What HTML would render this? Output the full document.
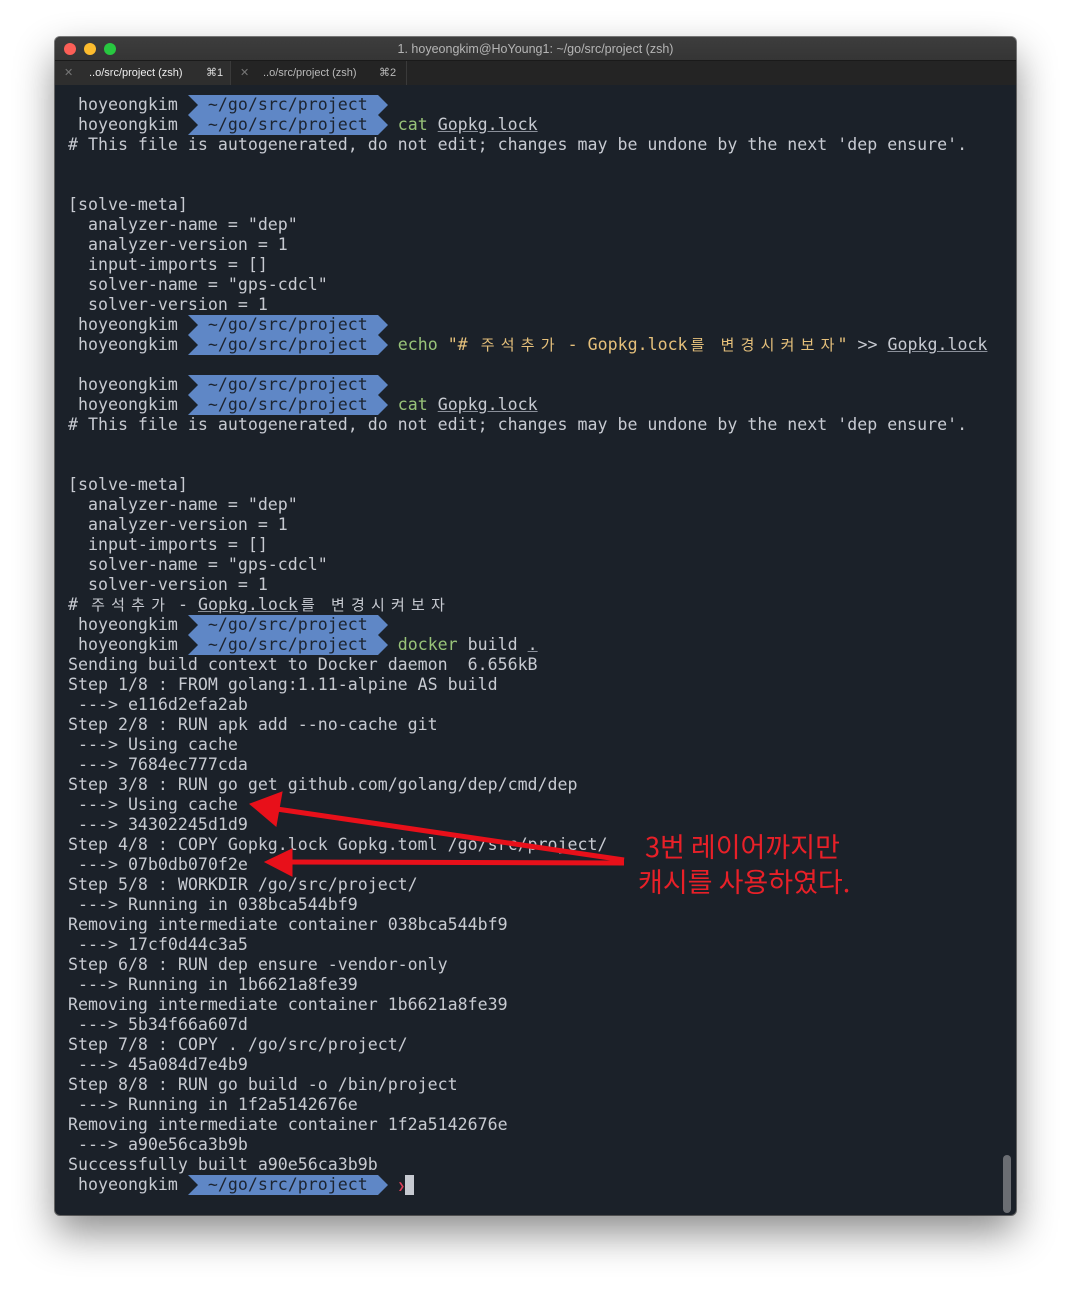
<!DOCTYPE html>
<html><head><meta charset="utf-8"><style>
html,body{margin:0;padding:0;background:#fff;width:1071px;height:1289px;overflow:hidden}
.win{position:absolute;left:55px;top:37px;width:961px;height:1178px;background:#1b2129;border-radius:5px;overflow:hidden;box-shadow:0 18px 40px rgba(0,0,0,.45),0 0 0 1px rgba(0,0,0,.5)}
.title{position:absolute;left:0;top:0;width:961px;height:23px;background:linear-gradient(#3d3d3d,#353535);color:#b5b5b5;font:12.5px "Liberation Sans",sans-serif;text-align:center;line-height:24px}
.dot{position:absolute;top:6px;width:12px;height:12px;border-radius:50%}
.tabs{position:absolute;left:0;top:23px;width:961px;height:24px;background:#242424;border-top:1px solid #1a1a1a;font:11px "Liberation Sans",sans-serif;color:#ddd}
.tab{position:absolute;top:0;height:24px;line-height:24px;border-right:1px solid #3a3a3a}
.l{position:absolute;left:0;height:20px;line-height:20px;white-space:pre}
.k{display:inline-block;width:20px;height:20px;line-height:20px;vertical-align:top;text-align:center;font-family:"Noto Sans CJK KR",sans-serif;font-size:15px;overflow:hidden}
.g{color:#98c379}.y{color:#e5c07b}.u{text-decoration:underline;text-decoration-color:#8a8f99}
.seg{position:absolute;left:120px;top:0}
.ann{position:absolute;font-family:"Noto Sans CJK KR",sans-serif;font-size:27px;color:#e82028;white-space:nowrap}
</style></head><body>
<div class="win">
<div class="title">1. hoyeongkim@HoYoung1: ~/go/src/project (zsh)
<div class="dot" style="left:9px;background:#fc5f57"></div><div class="dot" style="left:29px;background:#fdbc2e"></div><div class="dot" style="left:49px;background:#28c840"></div></div>
<div class="tabs">
<div class="tab" style="left:0;width:175px;background:#2e2e2e"><span style="position:absolute;left:9px;color:#777">✕</span><span style="position:absolute;left:34px;color:#eee">..o/src/project (zsh)</span><span style="position:absolute;left:151px">⌘1</span></div>
<div class="tab" style="left:176px;width:175px;color:#bbb"><span style="position:absolute;left:9px;color:#777">✕</span><span style="position:absolute;left:32px">..o/src/project (zsh)</span><span style="position:absolute;left:148px">⌘2</span></div>
</div>
<div style="position:absolute;left:948px;top:1118px;width:8px;height:58px;border-radius:4px;background:#6b6e73"></div>
</div>
<div id="term" style="position:absolute;left:68px;top:95px;font-family:'DejaVu Sans Mono','Noto Sans CJK KR',monospace;font-size:16.6px;color:#c7cad1">
</div>
<script>
function pr(cmd){return '<span style="position:relative"> hoyeongkim   </span>'+'<svg class="seg" width="201" height="20"><polygon points="0,0 190,0 200,10 190,20 0,20 10,10" fill="#5f87c6"/></svg><span style="position:relative;color:#1c2430">~/go/src/project</span><span style="position:relative">   '+(cmd||'')+'</span>';}
function K(s){return s.split('').map(function(c){return /[가-힣]/.test(c)?'<span class="k">'+c+'</span>':c}).join('');}
var hdr="# This file is autogenerated, do not edit; changes may be undone by the next 'dep ensure'.";
var meta=['[solve-meta]','  analyzer-name = "dep"','  analyzer-version = 1','  input-imports = []','  solver-name = "gps-cdcl"','  solver-version = 1'];
var L=[];
L.push(pr());L.push(pr('<span class="g">cat</span> <span class="u">Gopkg.lock</span>'));L.push(hdr);L.push('');L.push('');
L=L.concat(meta);
L.push(pr());L.push(pr('<span class="g">echo</span> <span class="y">"'+K('# 주석추가 - Gopkg.lock를 변경시켜보자')+'"</span> &gt;&gt; <span class="u">Gopkg.lock</span>'));
L.push('');L.push(pr());L.push(pr('<span class="g">cat</span> <span class="u">Gopkg.lock</span>'));L.push(hdr);L.push('');L.push('');
L=L.concat(meta);
L.push(K('# 주석추가 - <span class="u">Gopkg.lock</span>를 변경시켜보자'));
L.push(pr());L.push(pr('<span class="g">docker</span> build <span class="u">.</span>'));
L=L.concat(['Sending build context to Docker daemon  6.656kB','Step 1/8 : FROM golang:1.11-alpine AS build',' ---> e116d2efa2ab','Step 2/8 : RUN apk add --no-cache git',' ---> Using cache',' ---> 7684ec777cda','Step 3/8 : RUN go get github.com/golang/dep/cmd/dep',' ---> Using cache',' ---> 34302245d1d9','Step 4/8 : COPY Gopkg.lock Gopkg.toml /go/src/project/',' ---> 07b0db070f2e','Step 5/8 : WORKDIR /go/src/project/',' ---> Running in 038bca544bf9','Removing intermediate container 038bca544bf9',' ---> 17cf0d44c3a5','Step 6/8 : RUN dep ensure -vendor-only',' ---> Running in 1b6621a8fe39','Removing intermediate container 1b6621a8fe39',' ---> 5b34f66a607d','Step 7/8 : COPY . /go/src/project/',' ---> 45a084d7e4b9','Step 8/8 : RUN go build -o /bin/project',' ---> Running in 1f2a5142676e','Removing intermediate container 1f2a5142676e',' ---> a90e56ca3b9b','Successfully built a90e56ca3b9b']);
L.push(pr('<span style="color:#e0405a;font-size:12px">❯</span><span style="display:inline-block;width:9px;height:20px;background:#c7cad1;vertical-align:top"></span>'));
var h='';L.forEach(function(s,i){h+='<div class="l" style="top:'+(i*20)+'px">'+s+'</div>';});
document.getElementById('term').innerHTML=h;
</script>
<svg style="position:absolute;left:0;top:0" width="1071" height="1289">
<g fill="#e8101a" stroke="#e8101a">
<line x1="624" y1="860" x2="270" y2="808" stroke-width="5"/>
<polygon points="250,804 282,792 276,826"/>
<line x1="624" y1="863" x2="285" y2="862" stroke-width="5"/>
<polygon points="265,862 292,849 292,876"/>
</g></svg>
<div class="ann" style="left:645px;top:826px">3번 레이어까지만</div>
<div class="ann" style="left:638px;top:861px">캐시를 사용하였다.</div>
</body></html>
